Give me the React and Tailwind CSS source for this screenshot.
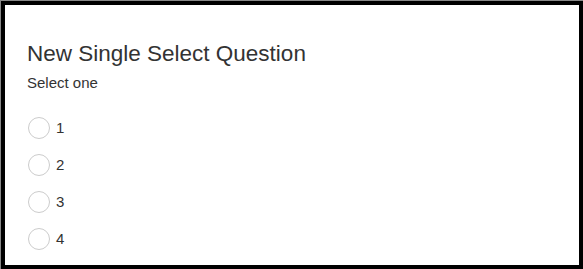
export default function App() {
  const opts = ["1", "2", "3", "4"];
  return (
    <div className="w-[583px] h-[269px] bg-[#888] pt-px pl-px" style={{ fontFamily: '"Liberation Sans", Arial, sans-serif' }}>
      <div className="w-[582px] h-[268px] border-4 border-black bg-white pl-[22px] pt-[36px] box-border">
        <div className="text-[22.5px] leading-[26px] text-[#333]">New Single Select Question</div>
        <div className="text-[15px] leading-[18px] text-[#333] mt-[7px]">Select one</div>
        <div className="flex flex-col gap-[15px] mt-[25px]">
          {opts.map((o) => (
            <div key={o} className="flex items-center h-[22px]">
              <span className="w-[22px] h-[22px] rounded-full border border-[#ccc] bg-white ml-px" />
              <span className="ml-[6px] text-[15px] text-[#333]">{o}</span>
            </div>
          ))}
        </div>
      </div>
    </div>
  );
}
